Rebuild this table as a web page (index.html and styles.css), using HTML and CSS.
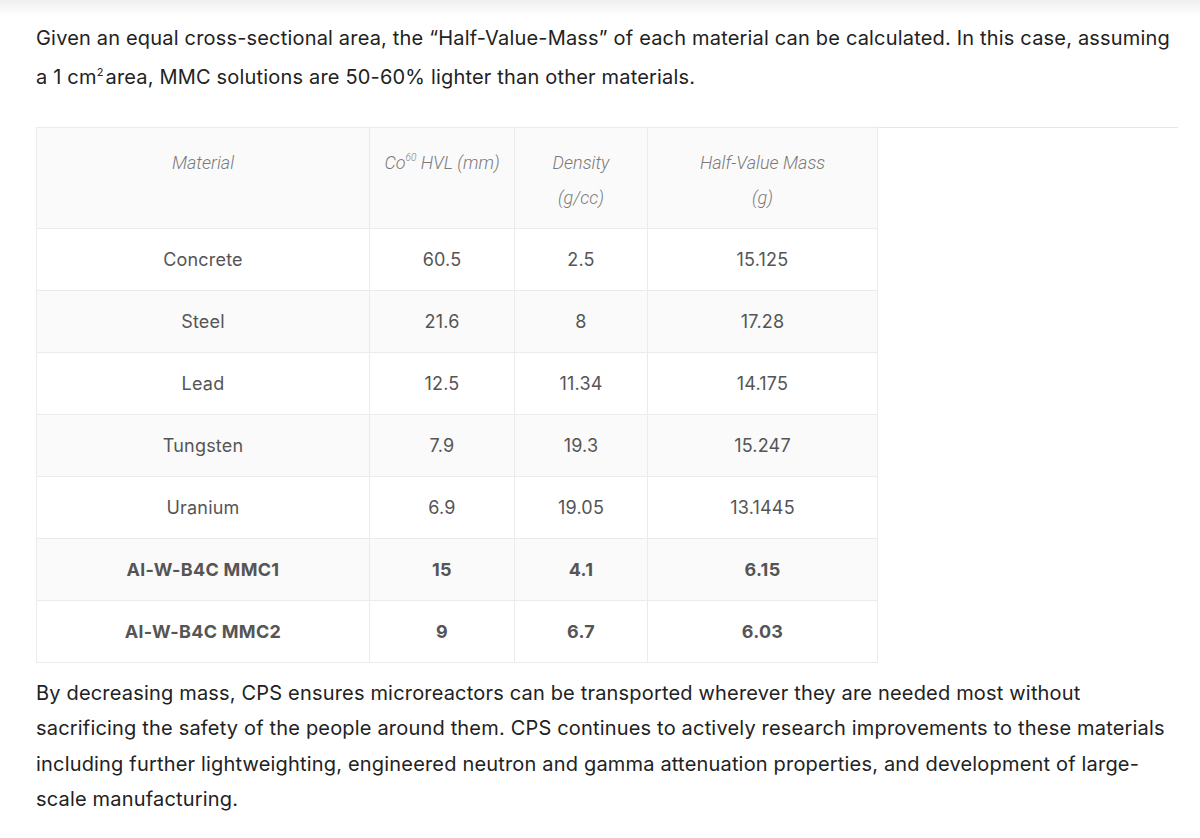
FILE: index.html
```html
<!DOCTYPE html>
<html lang="en">
<head>
<meta charset="utf-8">
<title>Half-Value-Mass</title>
<link rel="stylesheet" href="styles.css">
</head>
<body>
<div class="topfade"></div>
<main class="content">
  <p class="para first">Given an equal cross-sectional area, the “Half-Value-Mass” of each material can be calculated. In this case, assuming a 1 cm<sup>2</sup>area, MMC solutions are 50-60% lighter than other materials.</p>
  <figure class="table-wrap">
    <table class="data">
      <thead>
        <tr>
          <th class="c1">Material</th>
          <th class="c2">Co<sup>60</sup> HVL (mm)</th>
          <th class="c3">Density<br>(g/cc)</th>
          <th class="c4">Half-Value Mass<br>(g)</th>
        </tr>
      </thead>
      <tbody>
        <tr><td>Concrete</td><td>60.5</td><td>2.5</td><td>15.125</td></tr>
        <tr><td>Steel</td><td>21.6</td><td>8</td><td>17.28</td></tr>
        <tr><td>Lead</td><td>12.5</td><td>11.34</td><td>14.175</td></tr>
        <tr><td>Tungsten</td><td>7.9</td><td>19.3</td><td>15.247</td></tr>
        <tr><td>Uranium</td><td>6.9</td><td>19.05</td><td>13.1445</td></tr>
        <tr class="strong"><td>Al-W-B4C MMC1</td><td>15</td><td>4.1</td><td>6.15</td></tr>
        <tr class="strong"><td>Al-W-B4C MMC2</td><td>9</td><td>6.7</td><td>6.03</td></tr>
      </tbody>
    </table>
  </figure>
  <p class="para last">By decreasing mass, CPS ensures microreactors can be transported wherever they are needed most without sacrificing the safety of the people around them. CPS continues to actively research improvements to these materials including further lightweighting, engineered neutron and gamma attenuation properties, and development of large-scale manufacturing.</p>
</main>
</body>
</html>
```

FILE: styles.css
```css
html, body {
  margin: 0;
  padding: 0;
  background: #ffffff;
}

body {
  font-family: "Inter", "Liberation Sans", sans-serif;
  color: #222222;
}

.topfade {
  height: 16px;
  background: linear-gradient(#efefef, #ffffff);
  margin-bottom: -16px;
}

.content {
  width: 1142px;
  padding: 19px 0 0 36px;
}

.para {
  margin: 0;
  font-size: 20px;
  letter-spacing: 0.18px;
  line-height: 35.3px;
  color: #222222;
}

.para.first {
  line-height: 39px;
}

.para sup {
  font-size: 11px;
  line-height: 0;
  vertical-align: 8px;
  margin-right: 2px;
}

.table-wrap {
  margin: 30px 0 0 0;
  border-top: 1px solid #e6e6e6;
}

.data {
  border-collapse: collapse;
  margin-top: -1px;
  font-size: 18px;
}

.data th,
.data td {
  border: 1.5px solid #ebebeb;
  text-align: center;
}

.data th {
  background: #fafafa;
  font-family: "Roboto", "Liberation Sans", sans-serif;
  font-weight: 300;
  font-style: italic;
  font-size: 18px;
  line-height: 35px;
  color: #7a7a7a;
  vertical-align: top;
  padding: 17px 8px 13px;
}

.data th sup {
  font-size: 10px;
  line-height: 0;
  vertical-align: 8px;
}

.data .c1 { width: 316px; }
.data .c2 { width: 128px; }
.data .c3 { width: 116px; }
.data .c4 { width: 213px; }

.data td {
  height: 61px;
  padding: 0 8px;
  color: #555555;
  letter-spacing: 0.2px;
  vertical-align: middle;
}

.data tbody tr:nth-child(even) td {
  background: #fafafa;
}

.data tr.strong td {
  font-weight: 700;
  letter-spacing: 0.3px;
}

.para.last {
  margin-top: 13px;
}
```
